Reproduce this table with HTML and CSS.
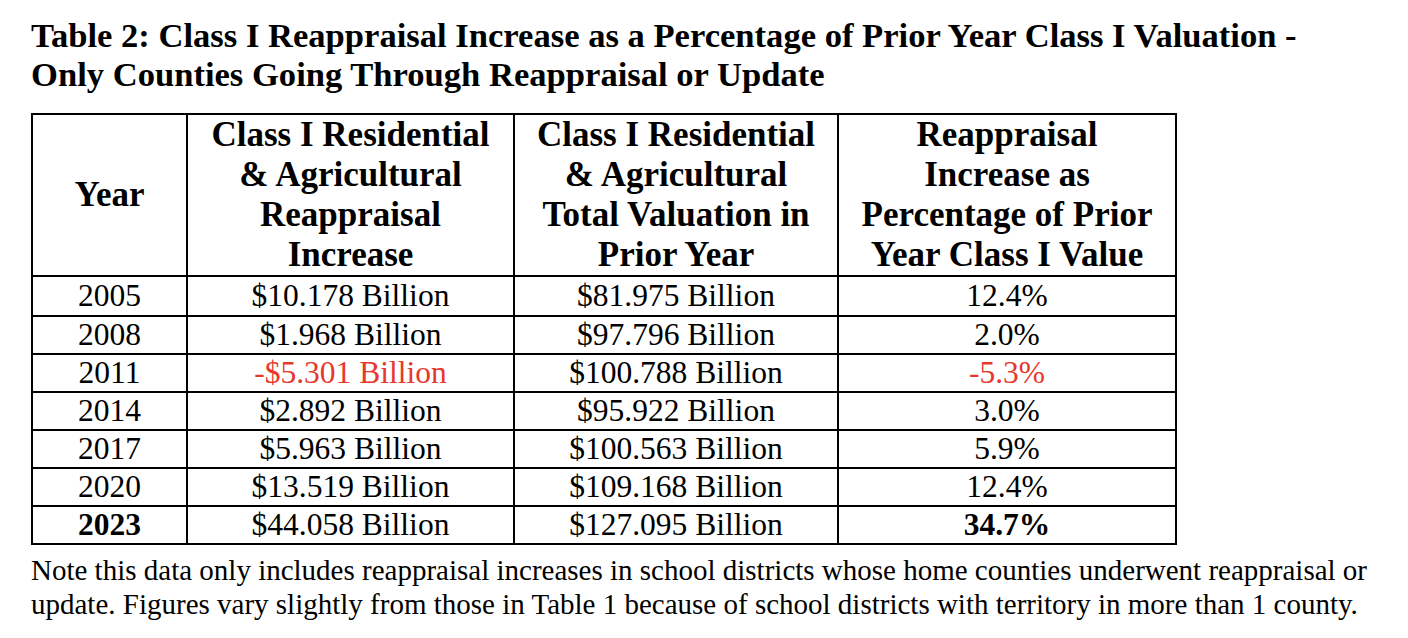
FILE: index.html
```html
<!DOCTYPE html>
<html lang="en">
<head>
    <meta charset="UTF-8">
    <meta name="viewport" content="width=device-width, initial-scale=1.0">
    <title>Table 2: Class I Reappraisal Increase</title>
    <link rel="stylesheet" href="styles.css">
</head>
<body>
    <div class="report">
        <h2 class="table-title">Table 2: Class I Reappraisal Increase as a Percentage of Prior Year Class I Valuation -<br>Only Counties Going Through Reappraisal or Update</h2>

        <table class="data-table">
            <colgroup>
                <col class="col-year">
                <col class="col-increase">
                <col class="col-total">
                <col class="col-percent">
            </colgroup>
            <thead>
                <tr>
                    <th>Year</th>
                    <th>Class I Residential<br>&amp; Agricultural<br>Reappraisal<br>Increase</th>
                    <th>Class I Residential<br>&amp; Agricultural<br>Total Valuation in<br>Prior Year</th>
                    <th>Reappraisal<br>Increase as<br>Percentage of Prior<br>Year Class I Value</th>
                </tr>
            </thead>
            <tbody>
                <tr class="first-row">
                    <td>2005</td>
                    <td>$10.178 Billion</td>
                    <td>$81.975 Billion</td>
                    <td>12.4%</td>
                </tr>
                <tr>
                    <td>2008</td>
                    <td>$1.968 Billion</td>
                    <td>$97.796 Billion</td>
                    <td>2.0%</td>
                </tr>
                <tr>
                    <td>2011</td>
                    <td class="negative">-$5.301 Billion</td>
                    <td>$100.788 Billion</td>
                    <td class="negative">-5.3%</td>
                </tr>
                <tr>
                    <td>2014</td>
                    <td>$2.892 Billion</td>
                    <td>$95.922 Billion</td>
                    <td>3.0%</td>
                </tr>
                <tr>
                    <td>2017</td>
                    <td>$5.963 Billion</td>
                    <td>$100.563 Billion</td>
                    <td>5.9%</td>
                </tr>
                <tr>
                    <td>2020</td>
                    <td>$13.519 Billion</td>
                    <td>$109.168 Billion</td>
                    <td>12.4%</td>
                </tr>
                <tr>
                    <td class="strong">2023</td>
                    <td>$44.058 Billion</td>
                    <td>$127.095 Billion</td>
                    <td class="strong">34.7%</td>
                </tr>
            </tbody>
        </table>

        <p class="table-note">Note this data only includes reappraisal increases in school districts whose home counties underwent reappraisal or<br>update. Figures vary slightly from those in Table 1 because of school districts with territory in more than 1 county.</p>
    </div>
</body>
</html>
```

FILE: styles.css
```css
body {
    margin: 0;
    background-color: #ffffff;
    color: #000000;
    font-family: "Liberation Serif", "Times New Roman", serif;
}

.report {
    padding: 16px 0 0 31px;
}

.table-title {
    margin: 0 0 19px 0;
    font-size: 34.6px;
    line-height: 39px;
    font-weight: 700;
}

.data-table {
    border-collapse: collapse;
    table-layout: fixed;
    width: 1144px;
}

.col-year {
    width: 155px;
}

.col-increase {
    width: 327px;
}

.col-total {
    width: 324px;
}

.col-percent {
    width: 338px;
}

.data-table th,
.data-table td {
    border: 2px solid #000000;
    padding: 0;
    text-align: center;
    vertical-align: middle;
}

.data-table th {
    font-size: 35px;
    line-height: 40px;
    font-weight: 700;
}

.data-table td {
    font-size: 31.5px;
    line-height: 36px;
}

.data-table .first-row td {
    line-height: 38px;
}

.negative {
    color: #e8382c;
}

.strong {
    font-weight: 700;
}

.table-note {
    margin: 8px 0 0 0;
    font-size: 29px;
    line-height: 34px;
}
```
